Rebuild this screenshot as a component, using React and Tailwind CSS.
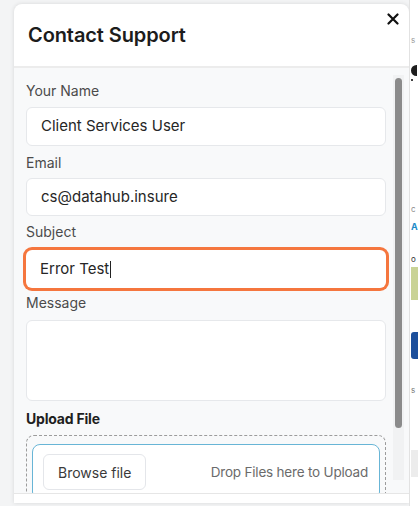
import React from 'react';

const Field = ({ label, value, className = '', labelClass = '' }) => (
  <>
    <div className={`text-[14px] leading-5 text-[#4b4b4b] mb-[6px] ${labelClass}`}>{label}</div>
    <div
      className={`h-[39px] bg-white border border-[#e6e8eb] rounded-[6px] flex items-center pl-[14px] text-[15px] text-[#262626] ${className}`}
    >
      {value}
    </div>
  </>
);

const App = () => {
  return (
    <div className="w-[418px] h-[506px] bg-[#f3f4f5] flex overflow-hidden font-['Inter',sans-serif]">
      {/* left gutter */}
      <div className="w-[14px] shrink-0" />

      {/* Modal */}
      <div className="w-[395px] shrink-0 mt-[4px] h-[499px] bg-white rounded-t-[8px] shadow-[0_0_4px_rgba(0,0,0,0.12)] flex flex-col overflow-hidden">
        {/* Header */}
        <div className="h-[64px] shrink-0 relative flex items-center pl-[14px] border-b-2 border-[#ececec]">
          <h2 className="text-[20px] font-semibold text-[#1c1c1c] tracking-[-0.1px]">Contact Support</h2>
          <button className="absolute top-[8px] right-[9px] w-[14px] h-[14px] flex items-center justify-center">
            <svg width="12" height="12" viewBox="0 0 12 12" fill="none" stroke="#111" strokeWidth="2.2" strokeLinecap="round">
              <path d="M1.5 1.5 L10.5 10.5 M10.5 1.5 L1.5 10.5" />
            </svg>
          </button>
        </div>

        {/* Body */}
        <div className="flex-1 min-h-0 bg-[#f8f9fa] flex">
          <div className="flex-1 min-w-0 pl-3 pr-[7px] pt-[13px] overflow-hidden">
            <Field label="Your Name" value="Client Services User" />
            <div className="text-[14px] leading-5 text-[#4b4b4b] mt-[7px] mb-[5px]">Email</div>
            <div className="h-[38px] bg-white border border-[#e6e8eb] rounded-[6px] flex items-center pl-[14px] text-[15px] text-[#262626]">
              cs@datahub.insure
            </div>
            <div className="text-[14px] leading-5 text-[#4b4b4b] mt-[6px] mb-[8px]">Subject</div>
            <div className="h-[38px] bg-white rounded-[6px] ring-[3px] ring-[#f5763e] flex items-center pl-[14px] text-[15px] text-[#262626]">
              Error Test
              <span className="inline-block w-px h-[17px] bg-[#222] ml-px" />
            </div>
            <div className="text-[14px] leading-5 text-[#4b4b4b] mt-[5px] mb-[7px]">Message</div>
            <div className="h-[81px] bg-white border border-[#e6e8eb] rounded-[6px]" />
            <div className="text-[14px] leading-5 font-bold tracking-[-0.2px] text-[#1f1f1f] mt-[8px] mb-[6px]">Upload File</div>
            <div className="border border-dashed border-[#9c9c9c] rounded-[8px] px-[5px] pt-[8px] pb-3">
              <div className="border-[1.5px] border-[#68b5d6] rounded-[8px] bg-white flex items-center justify-between pl-[10px] pr-[11px] pt-[9px] pb-[9px]">
                <div className="h-[36px] px-[14px] bg-white border border-[#e4e6ea] rounded-[6px] flex items-center text-[14px] text-[#3a3a3a]">
                  Browse file
                </div>
                <span className="text-[13.5px] tracking-[-0.2px] text-[#6b6b6b]">Drop Files here to Upload</span>
              </div>
            </div>
          </div>

          {/* scrollbar */}
          <div className="w-[11px] shrink-0 mr-[5px] mt-[7px] mb-[13px] bg-[#f1f2f3] flex justify-center">
            <div className="w-[7px] h-[350px] mt-[3px] bg-[#8b8b8b] rounded-full" />
          </div>
        </div>

        {/* Footer */}
        <div className="h-[10px] shrink-0 bg-white border-t border-[#e6e6e6]" />
      </div>

      {/* page behind modal, right edge */}
      <div className="w-[9px] shrink-0 bg-white border-l border-[#e2e2e2] flex flex-col overflow-hidden pl-[1px]">
        <div className="mt-[36px] text-[8px] leading-[9px] text-[#9a9a9a]">s</div>
        <div className="mt-[20px] w-[6px] h-[11px] bg-[#1e1e1e] rounded-l-full" />
        <div className="mt-[3px] w-[2px] h-[2px] bg-[#444]" />
        <div className="mt-[125px] text-[8px] leading-[7px] text-[#8a8a8a]">c</div>
        <div className="mt-[8px] text-[9px] leading-[11px] font-bold text-[#1e8bc8]">A</div>
        <div className="mt-[23px] text-[8px] leading-[8px] text-[#333]">o</div>
        <div className="mt-[4px] w-[8px] h-[33px] bg-[#c9d396]" />
        <div className="mt-[32px] w-[7px] h-[27px] bg-[#1c4f9c] rounded-l-[3px]" />
        <div className="mt-[28px] text-[8px] leading-[7px] text-[#777]">s</div>
        <div className="mt-[56px] w-[8px] h-[27px] bg-[#ececec]" />
      </div>
    </div>
  );
};

export default App;
